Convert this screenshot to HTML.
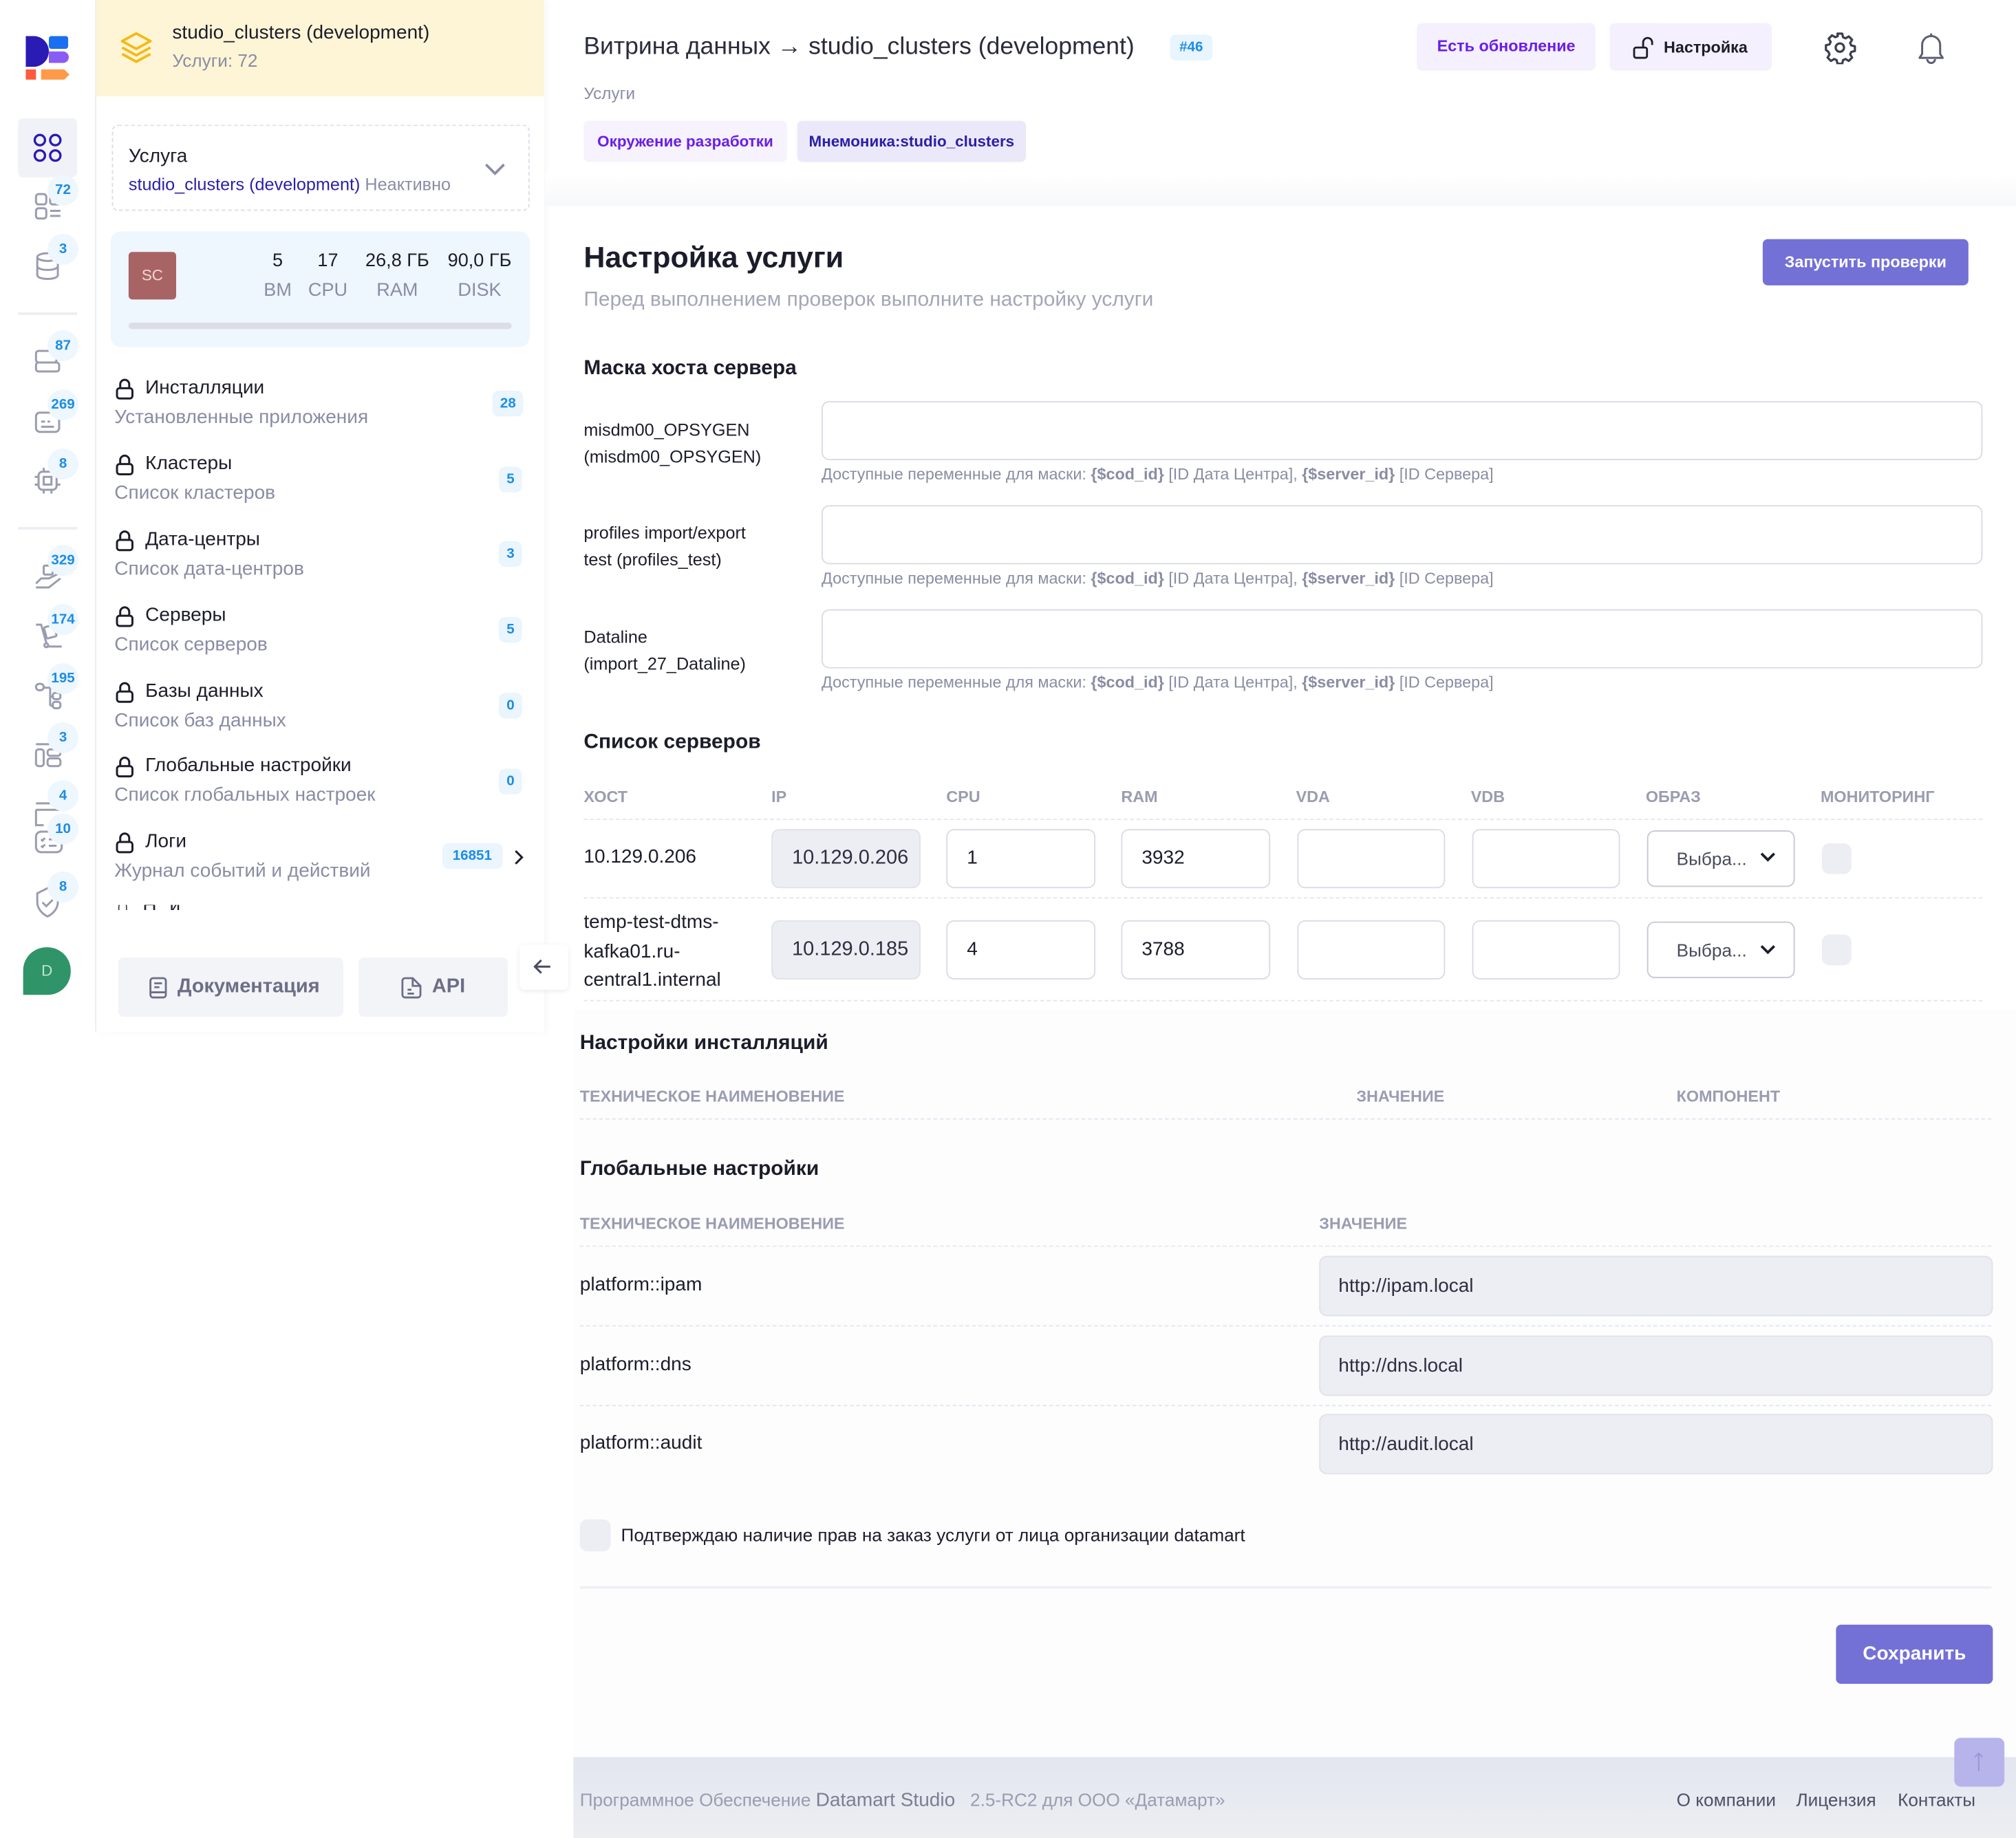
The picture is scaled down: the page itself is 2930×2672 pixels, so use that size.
<!DOCTYPE html>
<html><head><meta charset="utf-8">
<style>
html,body{margin:0;padding:0;background:#fff;width:2930px;height:2672px;overflow:hidden}
#w{position:absolute;left:0;top:0;width:1568px;height:1430px;transform:scale(1.86862);transform-origin:0 0;font-family:"Liberation Sans","Noto Sans CJK SC",sans-serif;color:#1c1d2b}
.a{position:absolute;white-space:nowrap}
.t{position:absolute;white-space:nowrap;line-height:20px}
.g{color:#8a8ca4}
.b{font-weight:bold}
.badge{position:absolute;height:20px;line-height:20px;padding:0 6px;border-radius:5px;background:#eaf5fe;color:#1b8de6;font-size:11px;font-weight:bold;text-align:center}
.rb{position:absolute;width:24px;height:24px;border-radius:12px;background:#eef6fe;color:#1b8de6;font-size:11px;font-weight:bold;text-align:center;line-height:24px}
.inp{position:absolute;border:1px solid #d9dbe6;border-radius:6px;background:#fff;box-sizing:border-box}
.inpg{position:absolute;border:1px solid #e0e2ea;border-radius:6px;background:#eceef3;box-sizing:border-box;font-size:15px;color:#2d2f40;padding-left:14px}
.dl{position:absolute;height:0;border-top:1px dashed #e4e6ee}
.th{position:absolute;font-size:12.5px;color:#9a9cb0;font-weight:bold;line-height:20px}
svg{position:absolute}
.sub{font-size:15px}
</style></head><body><div id="w">

<!-- icon rail -->
<div class="a" style="left:0;top:0;width:74px;height:803px;background:#fff;border-right:1px solid #eceef3"></div>
<svg style="left:20px;top:28px" width="36" height="34" viewBox="0 0 36 34">
<path d="M0 0h6a12 12 0 0 1 0 24H0z" fill="#2a1bb5"/>
<rect x="18" y="0" width="15" height="10" rx="2" fill="#1a6ff0"/>
<path d="M18 12h11a4 4 0 0 1 0 9H18z" fill="#8a5cf6"/>
<rect x="0" y="26" width="8" height="8" fill="#ff5a3c"/>
<path d="M12 26h18l4 4-4 4H12z" fill="#ff9a48"/>
</svg>
<div class="a" style="left:14px;top:92px;width:46px;height:46px;background:#f0f2f7;border-radius:4px"></div>
<svg style="left:26px;top:104px" width="22" height="22" viewBox="0 0 22 22" fill="none" stroke="#2a1bb5" stroke-width="1.8"><rect x="1" y="1" width="8" height="8" rx="4"/><rect x="13" y="1" width="8" height="8" rx="4"/><rect x="1" y="13" width="8" height="8" rx="4"/><rect x="13" y="13" width="8" height="8" rx="4"/></svg>
<svg style="left:27px;top:150px" width="22" height="22" viewBox="0 0 22 22" fill="none" stroke="#9a9cb0" stroke-width="1.6"><rect x="1" y="1" width="8" height="8" rx="2"/><rect x="12" y="1" width="8" height="8" rx="2"/><rect x="1" y="12" width="8" height="8" rx="2"/><path d="M12 14h8M12 18h8"/></svg>
<div class="rb" style="left:37px;top:136px">72</div>
<svg style="left:27px;top:196px" width="20" height="22" viewBox="0 0 20 22" fill="none" stroke="#9a9cb0" stroke-width="1.6"><ellipse cx="10" cy="4" rx="8" ry="3"/><path d="M2 4v14c0 2 4 3 8 3s8-1 8-3V4M2 11c0 2 4 3 8 3s8-1 8-3"/></svg>
<div class="rb" style="left:37px;top:182px">3</div>
<div class="a" style="left:14px;top:243px;width:46px;height:2px;background:#eceef3"></div>
<svg style="left:27px;top:270px" width="20" height="22" viewBox="0 0 20 22" fill="none" stroke="#9a9cb0" stroke-width="1.6"><rect x="1" y="3" width="16" height="9" rx="2"/><rect x="1" y="12" width="18" height="7" rx="2"/></svg>
<div class="rb" style="left:37px;top:257px">87</div>
<svg style="left:27px;top:317px" width="20" height="22" viewBox="0 0 20 22" fill="none" stroke="#9a9cb0" stroke-width="1.6"><rect x="1" y="4" width="18" height="15" rx="3"/><path d="M5 11h3M10 11h2M5 15h10"/></svg>
<div class="rb" style="left:37px;top:303px">269</div>
<svg style="left:27px;top:363px" width="20" height="22" viewBox="0 0 20 22" fill="none" stroke="#9a9cb0" stroke-width="1.6"><rect x="3" y="4" width="14" height="14" rx="3"/><rect x="7" y="8" width="6" height="6"/><path d="M7 1v3M13 1v3M7 18v3M13 18v3M0 8h3M0 14h3M17 8h3M17 14h3"/></svg>
<div class="rb" style="left:37px;top:349px">8</div>
<div class="a" style="left:14px;top:410px;width:46px;height:2px;background:#eceef3"></div>
<svg style="left:27px;top:437px" width="22" height="22" viewBox="0 0 22 22" fill="none" stroke="#9a9cb0" stroke-width="1.6"><rect x="7" y="3" width="7" height="7" rx="1"/><path d="M1 17l4-4h6l8-4M1 20h10l9-7"/></svg>
<div class="rb" style="left:37px;top:424px">329</div>
<svg style="left:27px;top:483px" width="22" height="22" viewBox="0 0 22 22" fill="none" stroke="#9a9cb0" stroke-width="1.6"><path d="M1 3h4l4 14M9 20h12"/><rect x="8" y="4" width="8" height="9" rx="1" transform="rotate(-15 12 8)"/><circle cx="9" cy="19" r="1.5"/></svg>
<div class="rb" style="left:37px;top:470px">174</div>
<svg style="left:27px;top:530px" width="22" height="22" viewBox="0 0 22 22" fill="none" stroke="#9a9cb0" stroke-width="1.6"><rect x="1" y="2" width="6" height="5" rx="2.5"/><path d="M7 5h5v14M12 12h3M12 19h3"/><rect x="14" y="9" width="6" height="5" rx="2"/><rect x="14" y="16" width="6" height="5" rx="2"/></svg>
<div class="rb" style="left:37px;top:516px">195</div>
<svg style="left:27px;top:576px" width="22" height="22" viewBox="0 0 22 22" fill="none" stroke="#9a9cb0" stroke-width="1.6"><path d="M1 3h18"/><rect x="1" y="7" width="6" height="13" rx="2"/><rect x="10" y="7" width="10" height="5" rx="2"/><rect x="10" y="14" width="10" height="6" rx="2"/></svg>
<div class="rb" style="left:37px;top:562px">3</div>
<svg style="left:27px;top:622px" width="22" height="44" viewBox="0 0 22 44" fill="none" stroke="#9a9cb0" stroke-width="1.6"><path d="M1 3h16M1 8h18M1 8v12h6"/><rect x="1" y="25" width="20" height="16" rx="4"/><path d="M5 31l1 1 2-2M5 36l1 1 2-2M11 31h6M11 36h6"/></svg>
<div class="rb" style="left:37px;top:607px">4</div>
<div class="rb" style="left:37px;top:633px">10</div>
<svg style="left:27px;top:690px" width="20" height="24" viewBox="0 0 20 24" fill="none" stroke="#9a9cb0" stroke-width="1.6"><path d="M10 1l8 4v7c0 5-4 9-8 11-4-2-8-6-8-11V5z"/><path d="M6 12l3 3 5-5"/></svg>
<div class="rb" style="left:37px;top:678px">8</div>
<div class="a" style="left:18px;top:737px;width:37px;height:37px;background:#2f9468;border-radius:18px 18px 18px 0;color:#bfe4cf;font-size:12px;text-align:center;line-height:37px">D</div>

<!-- sidebar -->
<div class="a" style="left:75px;top:0;width:348px;height:803px;background:#fff;box-shadow:2px 0 6px rgba(0,0,0,.04)"></div>
<div class="a" style="left:75px;top:0;width:348px;height:75px;background:#fdf5d5"></div>
<svg style="left:93px;top:24px" width="26" height="26" viewBox="0 0 26 26" fill="none" stroke="#f5b915" stroke-width="2" stroke-linejoin="round"><path d="M13 2l11 6-11 6L2 8z"/><path d="M2 13l11 6 11-6M2 18l11 6 11-6"/></svg>
<div class="t" style="left:134px;top:16px;font-size:15px">studio_clusters (development)</div>
<div class="t g" style="left:134px;top:37px;font-size:14px">Услуги: 72</div>
<div class="a" style="left:87px;top:97px;width:323px;height:65px;border:1.5px dashed #dcdee8;border-radius:5px"></div>
<div class="t" style="left:100px;top:112px;font-size:15px">Услуга</div>
<div class="t" style="left:100px;top:134px;font-size:13.5px"><span style="color:#2b1fa8">studio_clusters (development)</span> <span class="g">Неактивно</span></div>
<svg style="left:376px;top:126px" width="18" height="12" viewBox="0 0 18 12" fill="none" stroke="#8a8ca4" stroke-width="2"><path d="M2 2l7 7 7-7"/></svg>
<div class="a" style="left:86px;top:180px;width:326px;height:90px;background:#eef6fe;border-radius:8px"></div>
<div class="a" style="left:100px;top:196px;width:37px;height:37px;background:#a86464;border-radius:3px;color:#f3d6d6;font-size:12px;text-align:center;line-height:37px">SC</div>
<div class="t" style="left:204px;top:193px;width:24px;text-align:center;font-size:14.5px">5</div>
<div class="t g" style="left:199px;top:216px;width:34px;text-align:center;font-size:14.5px">ВМ</div>
<div class="t" style="left:240px;top:193px;width:30px;text-align:center;font-size:14.5px">17</div>
<div class="t g" style="left:237px;top:216px;width:36px;text-align:center;font-size:14.5px">CPU</div>
<div class="t" style="left:280px;top:193px;width:58px;text-align:center;font-size:14.5px">26,8 ГБ</div>
<div class="t g" style="left:280px;top:216px;width:58px;text-align:center;font-size:14.5px">RAM</div>
<div class="t" style="left:344px;top:193px;width:58px;text-align:center;font-size:14.5px">90,0 ГБ</div>
<div class="t g" style="left:344px;top:216px;width:58px;text-align:center;font-size:14.5px">DISK</div>
<div class="a" style="left:100px;top:251px;width:298px;height:5px;background:#dcdde8;border-radius:3px"></div>

<svg style="left:90px;top:294px" width="14" height="17" viewBox="0 0 14 17" fill="none" stroke="#1c1d2b" stroke-width="1.6"><path d="M3.5 8V5a3.5 3.5 0 0 1 7 0v3"/><rect x="1" y="8" width="12" height="8" rx="2"/></svg>
<div class="t" style="left:113px;top:292px;font-size:15px">Инсталляции</div>
<div class="t g sub" style="left:89px;top:315px">Установленные приложения</div>
<div class="badge" style="left:383px;top:304px">28</div>
<svg style="left:90px;top:353px" width="14" height="17" viewBox="0 0 14 17" fill="none" stroke="#1c1d2b" stroke-width="1.6"><path d="M3.5 8V5a3.5 3.5 0 0 1 7 0v3"/><rect x="1" y="8" width="12" height="8" rx="2"/></svg>
<div class="t" style="left:113px;top:351px;font-size:15px">Кластеры</div>
<div class="t g sub" style="left:89px;top:374px">Список кластеров</div>
<div class="badge" style="left:388px;top:363px">5</div>
<svg style="left:90px;top:412px" width="14" height="17" viewBox="0 0 14 17" fill="none" stroke="#1c1d2b" stroke-width="1.6"><path d="M3.5 8V5a3.5 3.5 0 0 1 7 0v3"/><rect x="1" y="8" width="12" height="8" rx="2"/></svg>
<div class="t" style="left:113px;top:410px;font-size:15px">Дата-центры</div>
<div class="t g sub" style="left:89px;top:433px">Список дата-центров</div>
<div class="badge" style="left:388px;top:421px">3</div>
<svg style="left:90px;top:471px" width="14" height="17" viewBox="0 0 14 17" fill="none" stroke="#1c1d2b" stroke-width="1.6"><path d="M3.5 8V5a3.5 3.5 0 0 1 7 0v3"/><rect x="1" y="8" width="12" height="8" rx="2"/></svg>
<div class="t" style="left:113px;top:469px;font-size:15px">Серверы</div>
<div class="t g sub" style="left:89px;top:492px">Список серверов</div>
<div class="badge" style="left:388px;top:480px">5</div>
<svg style="left:90px;top:530px" width="14" height="17" viewBox="0 0 14 17" fill="none" stroke="#1c1d2b" stroke-width="1.6"><path d="M3.5 8V5a3.5 3.5 0 0 1 7 0v3"/><rect x="1" y="8" width="12" height="8" rx="2"/></svg>
<div class="t" style="left:113px;top:528px;font-size:15px">Базы данных</div>
<div class="t g sub" style="left:89px;top:551px">Список баз данных</div>
<div class="badge" style="left:388px;top:539px">0</div>
<svg style="left:90px;top:588px" width="14" height="17" viewBox="0 0 14 17" fill="none" stroke="#1c1d2b" stroke-width="1.6"><path d="M3.5 8V5a3.5 3.5 0 0 1 7 0v3"/><rect x="1" y="8" width="12" height="8" rx="2"/></svg>
<div class="t" style="left:113px;top:586px;font-size:15px">Глобальные настройки</div>
<div class="t g sub" style="left:89px;top:609px">Список глобальных настроек</div>
<div class="badge" style="left:388px;top:598px">0</div>
<svg style="left:90px;top:647px" width="14" height="17" viewBox="0 0 14 17" fill="none" stroke="#1c1d2b" stroke-width="1.6"><path d="M3.5 8V5a3.5 3.5 0 0 1 7 0v3"/><rect x="1" y="8" width="12" height="8" rx="2"/></svg>
<div class="t" style="left:113px;top:645px;font-size:15px">Логи</div>
<div class="t g sub" style="left:89px;top:668px">Журнал событий и действий</div>
<div class="badge" style="left:344px;top:656px;padding:0 8px">16851</div>
<svg style="left:398px;top:661px" width="10" height="12" viewBox="0 0 10 12" fill="none" stroke="#1c1d2b" stroke-width="1.6"><path d="M3 1l5 5-5 5"/></svg>
<div class="a" style="left:90px;top:704px;width:90px;height:4px;overflow:hidden"><div style="margin-top:-8px;font-size:15px;letter-spacing:3px">∩ Н   й</div></div>

<div class="a" style="left:92px;top:745px;width:175px;height:46px;background:#f2f4f8;border-radius:4px"></div>
<svg style="left:116px;top:760px" width="14" height="17" viewBox="0 0 14 17" fill="none" stroke="#6c6e86" stroke-width="1.5"><rect x="1" y="1" width="12" height="15" rx="2"/><path d="M4 5h6M4 8h4M1 12h12"/></svg>
<div class="t b" style="left:138px;top:758px;font-size:15.5px;color:#6c6e86">Документация</div>
<div class="a" style="left:279px;top:745px;width:116px;height:46px;background:#f2f4f8;border-radius:4px"></div>
<svg style="left:312px;top:760px" width="16" height="17" viewBox="0 0 16 17" fill="none" stroke="#6c6e86" stroke-width="1.5"><path d="M3 1h6l6 6v7a2 2 0 0 1-2 2H3a2 2 0 0 1-2-2V3a2 2 0 0 1 2-2z"/><path d="M9 1v6h6M5 10h3M5 13h5"/></svg>
<div class="t b" style="left:336px;top:758px;font-size:15.5px;color:#6c6e86">API</div>
<div class="a" style="left:404px;top:735px;width:38px;height:35px;background:#fff;border-radius:4px;box-shadow:0 1px 4px rgba(0,0,0,.08)"></div>
<svg style="left:415px;top:746px" width="14" height="12" viewBox="0 0 14 12" fill="none" stroke="#4a4c60" stroke-width="1.6"><path d="M13 6H2M6 1L1 6l5 5"/></svg>

<!-- main header -->
<div class="t" style="left:454px;top:26px;font-size:19px;line-height:22px;color:#2a2b3b">Витрина данных <b style="font-weight:bold">→</b> studio_clusters (development)</div>
<div class="a" style="left:910px;top:27px;width:33px;height:20px;background:#e8f5fe;border-radius:4px;color:#1b8de6;font-size:11px;font-weight:bold;text-align:center;line-height:20px">#46</div>
<div class="a" style="left:1102px;top:18px;width:139px;height:37px;background:#f4f0fd;border-radius:4px;color:#6a1ee8;font-size:12.5px;font-weight:bold;text-align:center;line-height:37px">Есть обновление</div>
<div class="a" style="left:1252px;top:18px;width:126px;height:37px;background:#f4f0fd;border-radius:4px"></div>
<svg style="left:1270px;top:28px" width="18" height="18" viewBox="0 0 18 18" fill="none" stroke="#1c1d2b" stroke-width="1.5"><rect x="1" y="9" width="10" height="8" rx="1.5"/><path d="M8 9V5a3.5 3.5 0 0 1 7 0v2"/></svg>
<div class="t b" style="left:1294px;top:27px;font-size:12.5px">Настройка</div>
<svg style="left:1418px;top:24px" width="26" height="26" viewBox="0 0 24 24" fill="none" stroke="#3c3e50" stroke-width="1.6"><path d="M10.3 2h3.4l.6 2.6 1.8.8 2.3-1.4 2.4 2.4-1.4 2.3.8 1.8 2.6.6v3.4l-2.6.6-.8 1.8 1.4 2.3-2.4 2.4-2.3-1.4-1.8.8-.6 2.6h-3.4l-.6-2.6-1.8-.8-2.3 1.4-2.4-2.4 1.4-2.3-.8-1.8L2 13.7v-3.4l2.6-.6.8-1.8-1.4-2.3 2.4-2.4 2.3 1.4 1.8-.8z" stroke-linejoin="round"/><circle cx="12" cy="12" r="3"/></svg>
<svg style="left:1490px;top:24px" width="24" height="27" viewBox="0 0 24 27" fill="none" stroke="#5c5e72" stroke-width="1.6"><path d="M12 2v2M5 18V11a7 7 0 0 1 14 0v7l2 3H3z" stroke-linejoin="round"/><path d="M9 22a3 3 0 0 0 6 0"/></svg>
<div class="t g" style="left:454px;top:63px;font-size:13px">Услуги</div>
<div class="a" style="left:454px;top:94px;width:158px;height:32px;background:#f6f2fe;border-radius:4px;color:#6a1ee8;font-size:12px;font-weight:bold;text-align:center;line-height:32px">Окружение разработки</div>
<div class="a" style="left:620px;top:94px;width:178px;height:32px;background:#ebe9f9;border-radius:4px;color:#2b1fa8;font-size:12px;font-weight:bold;text-align:center;line-height:32px">Мнемоника:studio_clusters</div>
<div class="a" style="left:424px;top:135px;width:1144px;height:25px;background:linear-gradient(#fff,#f7f8fa)"></div>

<!-- settings -->
<div class="t b" style="left:454px;top:187px;font-size:23px;line-height:26px">Настройка услуги</div>
<div class="t" style="left:454px;top:224px;font-size:16px;color:#a4a6b8">Перед выполнением проверок выполните настройку услуги</div>
<div class="a" style="left:1371px;top:186px;width:160px;height:36px;background:#7370d6;border-radius:4px;color:#fff;font-size:12.5px;font-weight:bold;text-align:center;line-height:36px">Запустить проверки</div>
<div class="t b" style="left:454px;top:277px;font-size:16px">Маска хоста сервера</div>

<div class="t" style="left:454px;top:324px;font-size:13.5px;line-height:21px;white-space:normal;width:170px">misdm00_OPSYGEN<br>(misdm00_OPSYGEN)</div>
<div class="inp" style="left:639px;top:312px;width:903px;height:46px"></div>
<div class="t g" style="left:639px;top:359px;font-size:12.5px">Доступные переменные для маски: <b>{$cod_id}</b> [ID Дата Центра], <b>{$server_id}</b> [ID Сервера]</div>
<div class="t" style="left:454px;top:404px;font-size:13.5px;line-height:21px">profiles import/export<br>test (profiles_test)</div>
<div class="inp" style="left:639px;top:393px;width:903px;height:46px"></div>
<div class="t g" style="left:639px;top:440px;font-size:12.5px">Доступные переменные для маски: <b>{$cod_id}</b> [ID Дата Центра], <b>{$server_id}</b> [ID Сервера]</div>
<div class="t" style="left:454px;top:485px;font-size:13.5px;line-height:21px">Dataline<br>(import_27_Dataline)</div>
<div class="inp" style="left:639px;top:474px;width:903px;height:46px"></div>
<div class="t g" style="left:639px;top:521px;font-size:12.5px">Доступные переменные для маски: <b>{$cod_id}</b> [ID Дата Центра], <b>{$server_id}</b> [ID Сервера]</div>

<div class="t b" style="left:454px;top:568px;font-size:16px">Список серверов</div>
<div class="th" style="left:454px;top:610px">ХОСТ</div>
<div class="th" style="left:600px;top:610px">IP</div>
<div class="th" style="left:736px;top:610px">CPU</div>
<div class="th" style="left:872px;top:610px">RAM</div>
<div class="th" style="left:1008px;top:610px">VDA</div>
<div class="th" style="left:1144px;top:610px">VDB</div>
<div class="th" style="left:1280px;top:610px">ОБРАЗ</div>
<div class="th" style="left:1416px;top:610px">МОНИТОРИНГ</div>
<div class="dl" style="left:454px;top:637px;width:1088px"></div>
<div class="dl" style="left:454px;top:698px;width:1088px"></div>
<div class="dl" style="left:454px;top:778px;width:1088px"></div>

<div class="t" style="left:454px;top:657px;font-size:15px">10.129.0.206</div>
<div class="inpg" style="left:600px;top:645px;width:116px;height:46px;line-height:44px;overflow:hidden;font-size:15.5px;padding-left:15px">10.129.0.206</div>
<div class="inp" style="left:736px;top:645px;width:116px;height:46px;font-size:15px;line-height:44px;padding-left:15px">1</div>
<div class="inp" style="left:872px;top:645px;width:116px;height:46px;font-size:15px;line-height:44px;padding-left:15px">3932</div>
<div class="inp" style="left:1009px;top:645px;width:115px;height:46px"></div>
<div class="inp" style="left:1145px;top:645px;width:115px;height:46px"></div>
<div class="inp" style="left:1281px;top:646px;width:115px;height:44px;border-color:#c6c9d4;font-size:14px;color:#4a4c5c;line-height:42px;padding-left:22px">Выбра...</div>
<svg style="left:1368px;top:662px" width="14" height="10" viewBox="0 0 14 10" fill="none" stroke="#1c1d2b" stroke-width="2"><path d="M2 2l5 5 5-5"/></svg>
<div class="a" style="left:1417px;top:656px;width:23px;height:24px;background:#eceef3;border-radius:6px"></div>

<div class="t" style="left:454px;top:707px;font-size:15px;line-height:22.5px">temp-test-dtms-<br>kafka01.ru-<br>central1.internal</div>
<div class="inpg" style="left:600px;top:716px;width:116px;height:46px;line-height:44px;overflow:hidden;font-size:15.5px;padding-left:15px">10.129.0.185</div>
<div class="inp" style="left:736px;top:716px;width:116px;height:46px;font-size:15px;line-height:44px;padding-left:15px">4</div>
<div class="inp" style="left:872px;top:716px;width:116px;height:46px;font-size:15px;line-height:44px;padding-left:15px">3788</div>
<div class="inp" style="left:1009px;top:716px;width:115px;height:46px"></div>
<div class="inp" style="left:1145px;top:716px;width:115px;height:46px"></div>
<div class="inp" style="left:1281px;top:717px;width:115px;height:44px;border-color:#c6c9d4;font-size:14px;color:#4a4c5c;line-height:42px;padding-left:22px">Выбра...</div>
<svg style="left:1368px;top:734px" width="14" height="10" viewBox="0 0 14 10" fill="none" stroke="#1c1d2b" stroke-width="2"><path d="M2 2l5 5 5-5"/></svg>
<div class="a" style="left:1417px;top:727px;width:23px;height:24px;background:#eceef3;border-radius:6px"></div>

<!-- lower section -->
<div class="a" style="left:446px;top:785px;width:1122px;height:582px;background:#fdfdfe"></div>
<div class="t b" style="left:451px;top:802px;font-size:16px">Настройки инсталляций</div>
<div class="th" style="left:451px;top:843px">ТЕХНИЧЕСКОЕ НАИМЕНОВЕНИЕ</div>
<div class="th" style="left:1055px;top:843px">ЗНАЧЕНИЕ</div>
<div class="th" style="left:1304px;top:843px">КОМПОНЕНТ</div>
<div class="dl" style="left:451px;top:870px;width:1098px"></div>
<div class="t b" style="left:451px;top:900px;font-size:16px">Глобальные настройки</div>
<div class="th" style="left:451px;top:942px">ТЕХНИЧЕСКОЕ НАИМЕНОВЕНИЕ</div>
<div class="th" style="left:1026px;top:942px">ЗНАЧЕНИЕ</div>
<div class="dl" style="left:451px;top:969px;width:1098px"></div>
<div class="t" style="left:451px;top:990px;font-size:15px">platform::ipam</div>
<div class="inpg" style="left:1026px;top:977px;width:524px;height:47px;line-height:45px">http://ipam.local</div>
<div class="dl" style="left:451px;top:1031px;width:1098px"></div>
<div class="t" style="left:451px;top:1052px;font-size:15px">platform::dns</div>
<div class="inpg" style="left:1026px;top:1039px;width:524px;height:47px;line-height:45px">http://dns.local</div>
<div class="dl" style="left:451px;top:1093px;width:1098px"></div>
<div class="t" style="left:451px;top:1113px;font-size:15px">platform::audit</div>
<div class="inpg" style="left:1026px;top:1100px;width:524px;height:47px;line-height:45px">http://audit.local</div>
<div class="a" style="left:451px;top:1182px;width:24px;height:25px;background:#eceef3;border-radius:6px"></div>
<div class="t" style="left:483px;top:1184px;font-size:14px">Подтверждаю наличие прав на заказ услуги от лица организации datamart</div>
<div class="a" style="left:451px;top:1234px;width:1098px;height:2px;background:#eef0f4"></div>
<div class="a" style="left:1428px;top:1264px;width:122px;height:46px;background:#7370d6;border-radius:4px;color:#fff;font-size:15px;font-weight:bold;text-align:center;line-height:46px">Сохранить</div>

<!-- footer -->
<div class="a" style="left:446px;top:1367px;width:1122px;height:63px;background:linear-gradient(#e3e6f0,#eceef2)"></div>
<div class="t" style="left:451px;top:1390px;font-size:14px;color:#9a9cb0">Программное Обеспечение <span style="color:#7c7e94;font-size:15px">Datamart Studio</span> &nbsp; 2.5-RC2 для ООО «Датамарт»</div>
<div class="t" style="left:1304px;top:1390px;font-size:14px;color:#4e5066">О компании</div>
<div class="t" style="left:1397px;top:1390px;font-size:14px;color:#4e5066">Лицензия</div>
<div class="t" style="left:1476px;top:1390px;font-size:14px;color:#4e5066">Контакты</div>
<div class="a" style="left:1520px;top:1352px;width:39px;height:38px;background:#b7b4ec;border-radius:5px"></div>
<svg style="left:1535px;top:1363px" width="8" height="16" viewBox="0 0 8 16" fill="none" stroke="#9694d6" stroke-width="1"><path d="M4 15V1M1 4l3-3 3 3"/></svg>

</div></body></html>
